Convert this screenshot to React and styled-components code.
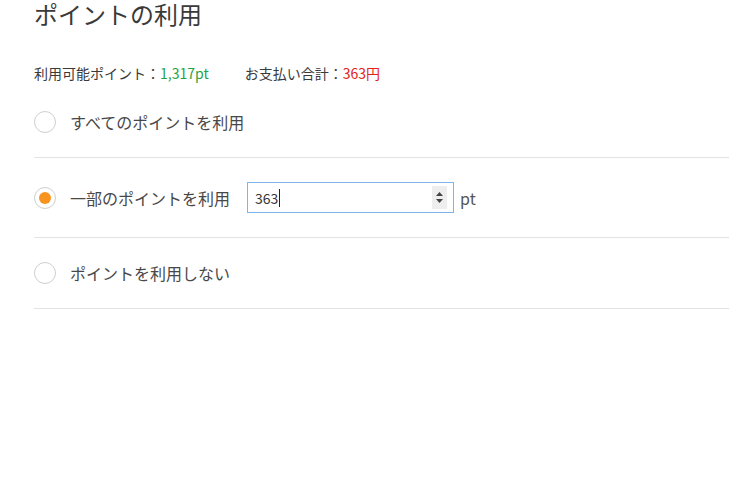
import React from 'react';
import styled, { createGlobalStyle } from 'styled-components';

const GlobalStyle = createGlobalStyle`
  body {
    margin: 0;
    background: #fff;
    font-family: "Noto Sans CJK JP", "Noto Sans", sans-serif;
    color: #333;
  }
`;

const Page = styled.section`
  padding: 0 9px 0 34px;
`;

const Title = styled.h1`
  margin: 0;
  font-size: 24px;
  font-weight: 400;
  line-height: 28px;
  color: #3a3a3a;
`;

const Summary = styled.p`
  margin: 35px 0 0;
  font-size: 14px;
  line-height: 20px;
  display: flex;
  gap: 36px;
  color: #3a3a3a;
`;

const Amount = styled.span`
  color: ${(p) => (p.tone === 'green' ? '#1ea543' : '#e2231a')};
`;

const Options = styled.ul`
  list-style: none;
  margin: 4px 0 0;
  padding: 0;
`;

const Option = styled.li`
  display: flex;
  align-items: center;
  padding: 24px 0;
  border-bottom: 1px solid #e3e3e3;
`;

const Radio = styled.span`
  width: 22px;
  height: 22px;
  box-sizing: border-box;
  border-radius: 50%;
  border: 1px solid #cfcfcf;
  display: flex;
  align-items: center;
  justify-content: center;
  flex-shrink: 0;

  &::after {
    content: '';
    width: 12px;
    height: 12px;
    border-radius: 50%;
    background: ${(p) => (p.checked ? '#f7931e' : 'transparent')};
  }
`;

const Label = styled.span`
  margin-left: 14px;
  font-size: 16px;
  line-height: 22px;
  color: #484848;
`;

const Field = styled.div`
  margin-left: 17px;
  width: 207px;
  height: 31px;
  box-sizing: border-box;
  border: 1px solid #7eb4ea;
  display: flex;
  align-items: center;
  padding: 0 6px 0 7px;
`;

const Value = styled.span`
  flex: 1;
  font-size: 14px;
  color: #333;
  display: flex;
  align-items: center;

  &::after {
    content: '';
    width: 1px;
    height: 18px;
    background: #222;
    margin-left: 1px;
  }
`;

const Spinner = styled.span`
  width: 15px;
  height: 23px;
  background: #eeeeee;
  display: flex;
  flex-direction: column;
  align-items: center;
  justify-content: center;
  gap: 3px;
`;

const Unit = styled.span`
  margin-left: 6px;
  font-size: 16px;
  color: #555;
`;

const Arrow = ({ up }) => (
  <svg width="7" height="4" viewBox="0 0 7 4">
    <path d={up ? 'M0 4 L3.5 0 L7 4 Z' : 'M0 0 L3.5 4 L7 0 Z'} fill="#444" />
  </svg>
);

export default function App() {
  return (
    <Page>
      <GlobalStyle />
      <Title>ポイントの利用</Title>
      <Summary>
        <span>
          利用可能ポイント：<Amount tone="green">1,317pt</Amount>
        </span>
        <span>
          お支払い合計：<Amount tone="red">363円</Amount>
        </span>
      </Summary>
      <Options>
        <Option>
          <Radio />
          <Label>すべてのポイントを利用</Label>
        </Option>
        <Option>
          <Radio checked />
          <Label>一部のポイントを利用</Label>
          <Field>
            <Value>363</Value>
            <Spinner>
              <Arrow up />
              <Arrow />
            </Spinner>
          </Field>
          <Unit>pt</Unit>
        </Option>
        <Option>
          <Radio />
          <Label>ポイントを利用しない</Label>
        </Option>
      </Options>
    </Page>
  );
}
